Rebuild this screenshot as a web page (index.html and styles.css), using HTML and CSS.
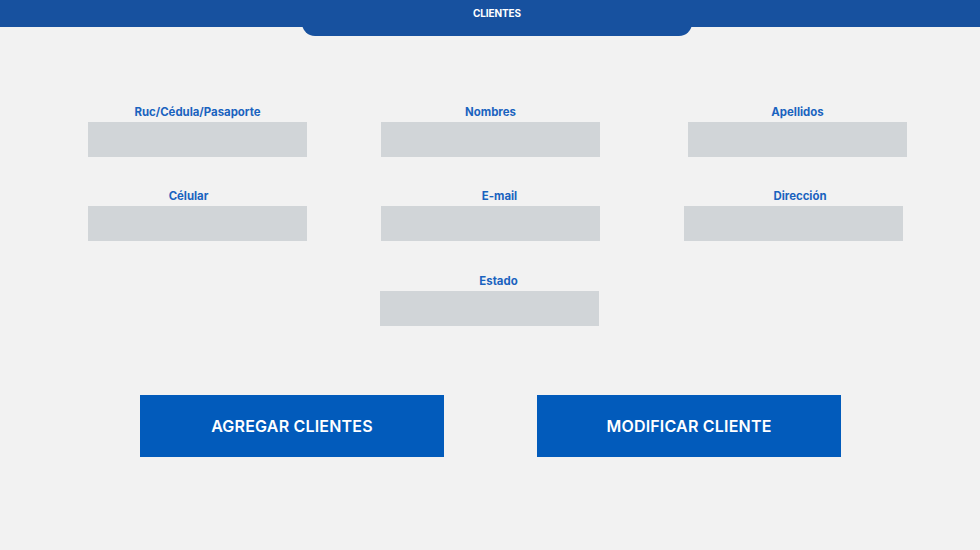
FILE: index.html
```html
<!DOCTYPE html>
<html lang="es">
<head>
<meta charset="utf-8">
<title>Clientes</title>
<link rel="stylesheet" href="styles.css">
</head>
<body>
<header class="topbar">
  <div class="tab">CLIENTES</div>
</header>
<main class="page">
  <form class="form-grid">
    <div class="field">
      <label class="label">Ruc/Cédula/Pasaporte</label>
      <input class="input" type="text">
    </div>
    <div class="field">
      <label class="label">Nombres</label>
      <input class="input" type="text">
    </div>
    <div class="field col3">
      <label class="label">Apellidos</label>
      <input class="input" type="text">
    </div>
    <div class="field">
      <label class="label shift-left">Célular</label>
      <input class="input" type="text">
    </div>
    <div class="field">
      <label class="label shift-right">E-mail</label>
      <input class="input" type="text">
    </div>
    <div class="field col3b">
      <label class="label shift-right-sm">Dirección</label>
      <input class="input" type="text">
    </div>
    <div class="field estado">
      <label class="label shift-right">Estado</label>
      <input class="input" type="text">
    </div>
  </form>
  <div class="actions">
    <button class="btn" type="button">AGREGAR CLIENTES</button>
    <button class="btn" type="button">MODIFICAR CLIENTE</button>
  </div>
</main>
</body>
</html>
```
FILE: styles.css
```css
* { box-sizing: border-box; }
html, body { margin: 0; padding: 0; }
body {
  width: 980px;
  height: 550px;
  background: #f2f2f2;
  font-family: "Inter", "Noto Sans", sans-serif;
  overflow: hidden;
}
.topbar {
  height: 27px;
  background: #17519f;
  position: relative;
}
.tab {
  position: absolute;
  left: 302px;
  top: 0;
  width: 390px;
  height: 36px;
  background: #17519f;
  border-radius: 0 0 13px 13px;
  color: #ffffff;
  font-size: 10px;
  font-weight: 700;
  line-height: 27px;
  text-align: center;
  letter-spacing: -0.1px;
}
.page {
  padding-top: 78px;
}
.form-grid {
  display: grid;
  grid-template-columns: 219px 219px 219px;
  column-gap: 74px;
  row-gap: 32px;
  padding-left: 88px;
  margin: 0;
}
.field {
  display: flex;
  flex-direction: column;
  width: 219px;
}
.col3 { margin-left: 14px; }
.col3b { margin-left: 10px; }
.estado { grid-column: 2; margin-left: -1px; margin-top: 1px; }
.label {
  display: block;
  height: 14px;
  line-height: 14px;
  margin-bottom: 3px;
  text-align: center;
  color: #1a63bf;
  font-size: 11.4px;
  font-weight: 700;
}
.shift-left { padding-right: 18px; }
.shift-right { padding-left: 18px; }
.shift-right-sm { padding-left: 13px; }
.input {
  display: block;
  width: 219px;
  height: 35px;
  border: 0;
  margin: 0;
  padding: 0;
  background: #d1d5d8;
  outline: none;
}
.actions {
  display: flex;
  justify-content: center;
  gap: 93px;
  margin-top: 69px;
  padding-left: 1px;
}
.btn {
  width: 304px;
  height: 62px;
  border: 0;
  background: #025bbb;
  color: #ffffff;
  font-family: "Inter", "Noto Sans", sans-serif;
  font-size: 16px;
  font-weight: 600;
  letter-spacing: 0.2px;
  padding: 0;
}
```
